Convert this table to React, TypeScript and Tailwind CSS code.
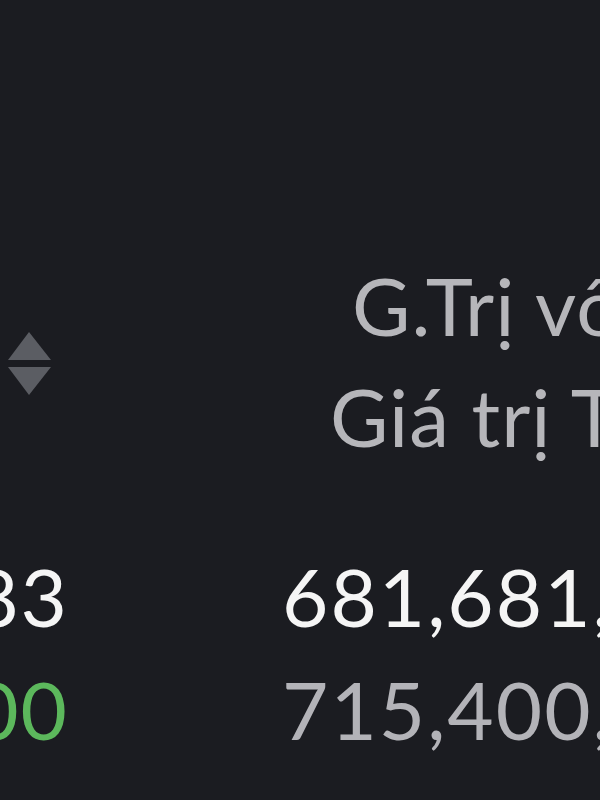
import React from 'react'

const rows = [
  { left: '45,683', leftColor: 'text-[#f5f5f5]', value: '681,681,683', valueColor: 'text-[#f5f5f5]' },
  { left: '1,200', leftColor: 'text-[#5cb85c]', value: '715,400,000', valueColor: 'text-[#b3b3b8]' },
]

function SortIcon() {
  return (
    <svg width="46" height="66" viewBox="0 0 46 66" className="block">
      <path d="M22 1 L44 29 L1 29 Z" fill="#5b5d63" />
      <path d="M1 36 L44 36 L22 64 Z" fill="#5b5d63" />
    </svg>
  )
}

export default function App() {
  return (
    <div className="w-[600px] h-[800px] overflow-hidden bg-[#1b1c21] font-['Lato','Open_Sans',sans-serif] text-[80px] leading-[111px]">
      <div className="pt-[250px] grid grid-cols-[66px_1fr]">
        {/* header */}
        <div className="h-[222px] pt-[81px] pl-[7px]">
          <SortIcon />
        </div>
        <div className="h-[222px] pl-[216px] text-[#b6b6ba] whitespace-nowrap tracking-[1px]">
          <div className="pl-[70px]">G.Trị vốn hóa</div>
          <div className="pl-[48px]">Giá trị TT</div>
        </div>

        {/* data */}
        <div className="mt-[68px] -mr-[3px]">
          {rows.map(r => (
            <div key={r.value} className={`flex justify-end whitespace-nowrap leading-[113px] tracking-[2px] ${r.leftColor}`}>
              {r.left}
            </div>
          ))}
        </div>
        <div className="mt-[68px] pl-[216px]">
          {rows.map(r => (
            <div key={r.value} className={`whitespace-nowrap leading-[113px] tracking-[2px] ${r.valueColor}`}>
              {r.value}
            </div>
          ))}
        </div>
      </div>
    </div>
  )
}
